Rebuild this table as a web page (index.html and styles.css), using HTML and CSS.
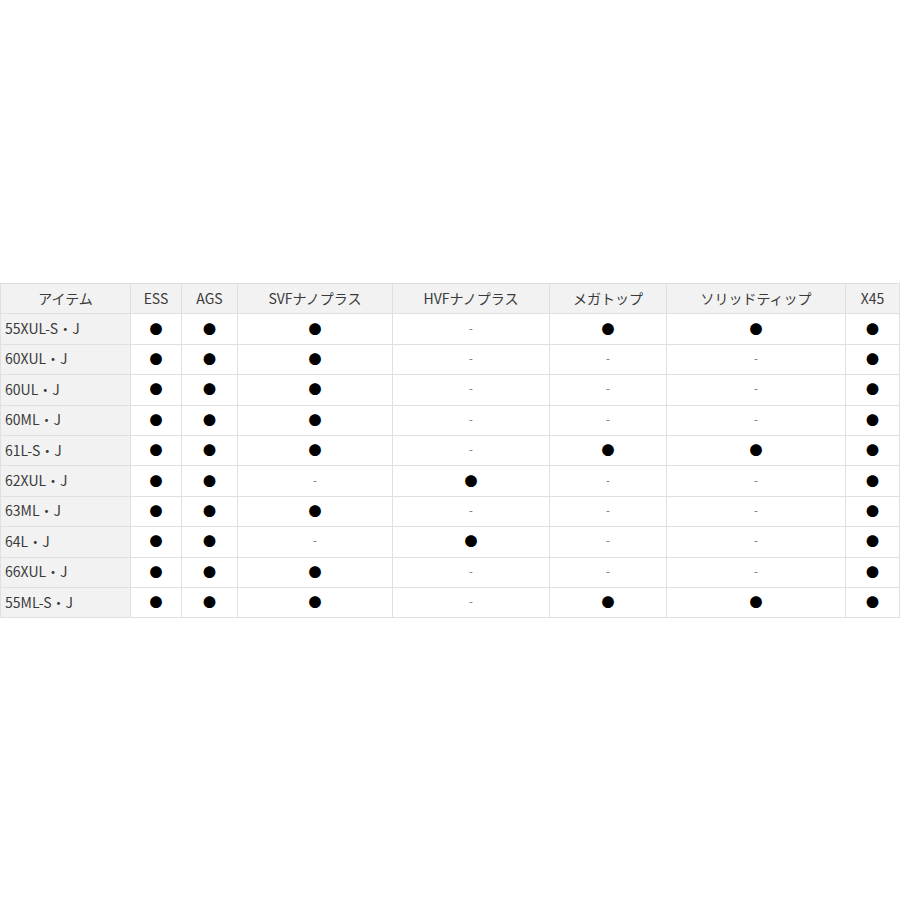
FILE: index.html
```html
<!DOCTYPE html>
<html lang="ja">
<head>
<meta charset="utf-8">
<link rel="stylesheet" href="styles.css">
</head>
<body>
<div class="wrap">
<table class="spec">
<colgroup>
<col class="c1"><col class="c2"><col class="c3"><col class="c4"><col class="c5"><col class="c6"><col class="c7"><col class="c8">
</colgroup>
<thead>
<tr><th>アイテム</th><th>ESS</th><th>AGS</th><th>SVFナノプラス</th><th>HVFナノプラス</th><th>メガトップ</th><th>ソリッドティップ</th><th>X45</th></tr>
</thead>
<tbody>
<tr><th>55XUL-S・J</th><td>●</td><td>●</td><td>●</td><td class="d">-</td><td>●</td><td>●</td><td>●</td></tr>
<tr><th>60XUL・J</th><td>●</td><td>●</td><td>●</td><td class="d">-</td><td class="d">-</td><td class="d">-</td><td>●</td></tr>
<tr><th>60UL・J</th><td>●</td><td>●</td><td>●</td><td class="d">-</td><td class="d">-</td><td class="d">-</td><td>●</td></tr>
<tr><th>60ML・J</th><td>●</td><td>●</td><td>●</td><td class="d">-</td><td class="d">-</td><td class="d">-</td><td>●</td></tr>
<tr><th>61L-S・J</th><td>●</td><td>●</td><td>●</td><td class="d">-</td><td>●</td><td>●</td><td>●</td></tr>
<tr><th>62XUL・J</th><td>●</td><td>●</td><td class="d">-</td><td>●</td><td class="d">-</td><td class="d">-</td><td>●</td></tr>
<tr><th>63ML・J</th><td>●</td><td>●</td><td>●</td><td class="d">-</td><td class="d">-</td><td class="d">-</td><td>●</td></tr>
<tr><th>64L・J</th><td>●</td><td>●</td><td class="d">-</td><td>●</td><td class="d">-</td><td class="d">-</td><td>●</td></tr>
<tr><th>66XUL・J</th><td>●</td><td>●</td><td>●</td><td class="d">-</td><td class="d">-</td><td class="d">-</td><td>●</td></tr>
<tr><th>55ML-S・J</th><td>●</td><td>●</td><td>●</td><td class="d">-</td><td>●</td><td>●</td><td>●</td></tr>
</tbody>
</table>
</div>
</body>
</html>
```
FILE: styles.css
```css
html, body {
  margin: 0;
  padding: 0;
  background: #fff;
}
.wrap {
  padding-top: 283px;
}
.spec {
  border-collapse: collapse;
  table-layout: fixed;
  width: 899px;
  font-family: "Noto Sans CJK JP", "Noto Sans", sans-serif;
  font-size: 14px;
  color: #3a3a3a;
}
.c1 { width: 130px; }
.c2 { width: 51px; }
.c3 { width: 56px; }
.c4 { width: 155px; }
.c5 { width: 157px; }
.c6 { width: 117px; }
.c7 { width: 179px; }
.c8 { width: 54px; }
.spec th, .spec td {
  border: 1px solid #e0e0e0;
  height: 27.4px;
  padding: 0 0 2px;
  text-align: center;
  font-weight: normal;
  line-height: 1;
}
.spec thead th {
  background: #f2f2f2;
}
.spec tbody th {
  background: #f2f2f2;
  text-align: left;
  padding-left: 4px;
}
.spec td {
  color: #000;
  font-size: 13px;
}
.spec td.d {
  color: #666;
  font-size: 11px;
}
```
